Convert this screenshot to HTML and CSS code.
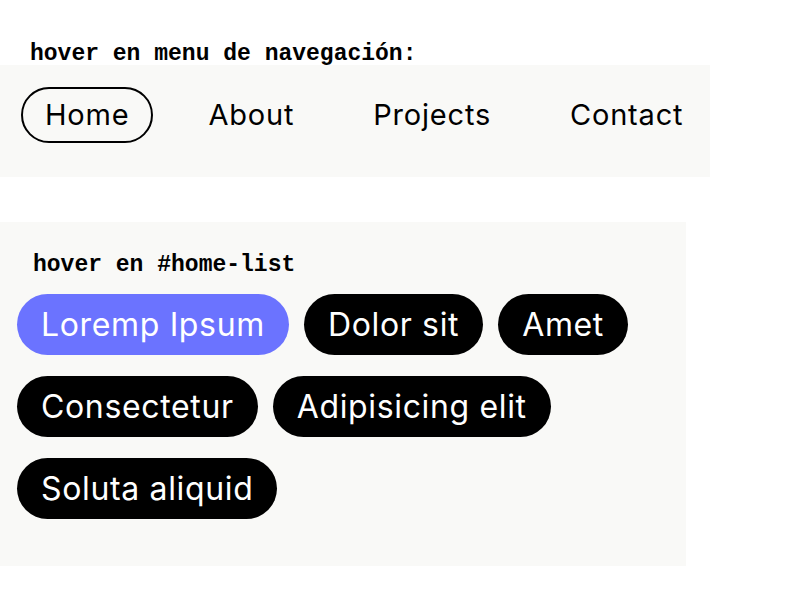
FILE: index.html
```html
<!DOCTYPE html>
<html lang="es">
<head>
<meta charset="utf-8">
<link rel="stylesheet" href="styles.css">
</head>
<body>
  <p class="label label-nav">hover en menu de navegación:</p>
  <nav class="nav">
    <a class="nav-item active">Home</a>
    <a class="nav-item">About</a>
    <a class="nav-item">Projects</a>
    <a class="nav-item">Contact</a>
  </nav>
  <section class="list-box">
    <p class="label label-list">hover en #home-list</p>
    <ul class="pills">
      <li class="pill pill-hover">Loremp Ipsum</li>
      <li class="pill">Dolor sit</li>
      <li class="pill">Amet</li>
      <li class="pill">Consectetur</li>
      <li class="pill">Adipisicing elit</li>
      <li class="pill">Soluta aliquid</li>
    </ul>
  </section>
</body>
</html>
```
FILE: styles.css
```css
* { box-sizing: border-box; }
html, body { margin: 0; padding: 0; background: #fff; }
body { font-family: Inter, "Noto Sans", sans-serif; color: #000; }

.label {
  font-family: "Courier New", "Liberation Mono", monospace;
  font-weight: bold;
  font-size: 23px;
  line-height: 26px;
  margin: 0;
}
.label-nav { padding: 41px 0 0 30px; height: 65px; }

.nav {
  width: 710px;
  background: #f9f9f7;
  display: flex;
  gap: 31px;
  padding: 22px 0 34px 21px;
}
.nav-item {
  display: block;
  font-size: 29px;
  letter-spacing: 0.8px;
  line-height: 52px;
  padding: 0 22px;
  border: 2px solid transparent;
  border-radius: 30px;
}
.nav-item.active { border-color: #000; }

.list-box {
  width: 686px;
  margin-top: 45px;
  background: #f9f9f7;
  padding: 30px 0 47px 17px;
}
.label-list { padding-left: 16px; margin-bottom: 16px; }

.pills {
  list-style: none;
  margin: 0;
  padding: 0;
  display: flex;
  flex-wrap: wrap;
  column-gap: 15px;
  row-gap: 21px;
  max-width: 640px;
}
.pill {
  background: #000;
  color: #fff;
  font-size: 32px;
  letter-spacing: 0.65px;
  line-height: 61px;
  height: 61px;
  padding: 0 24px;
  border-radius: 31px;
}
.pill-hover { background: #6b73ff; }
```
